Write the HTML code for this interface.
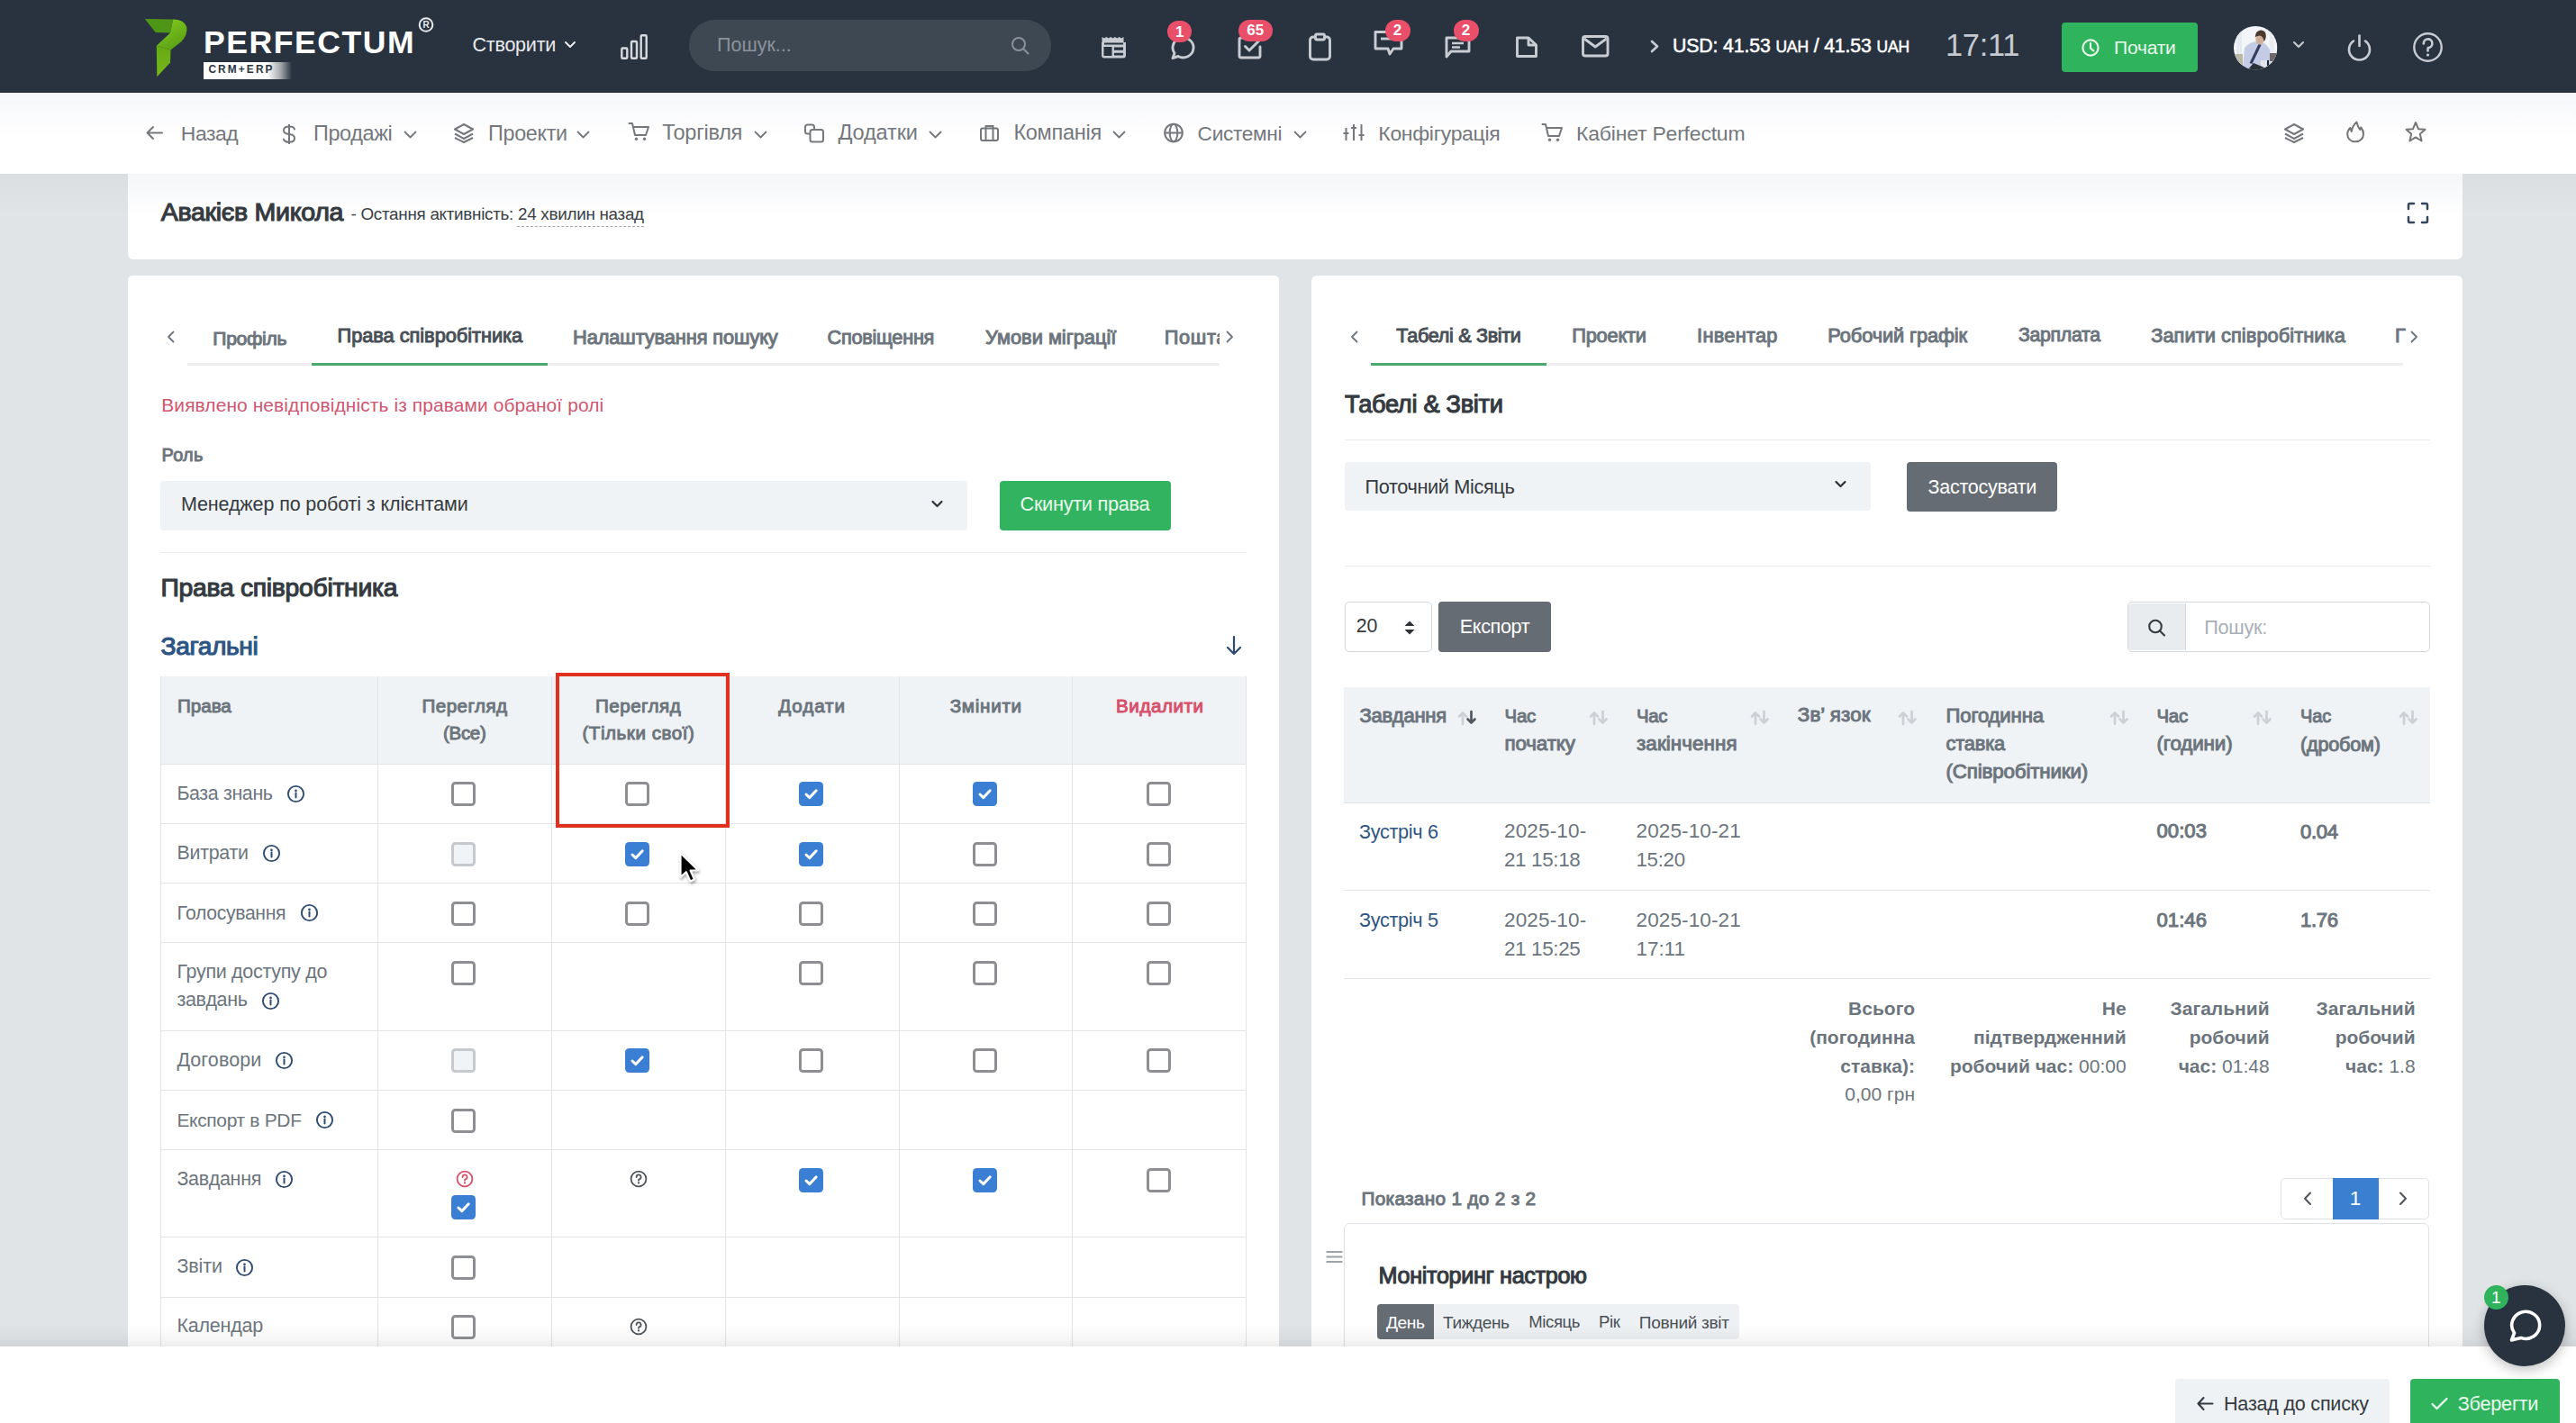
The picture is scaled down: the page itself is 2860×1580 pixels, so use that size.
<!DOCTYPE html><html><head><meta charset="utf-8"><style>
html,body{margin:0;padding:0;}
body{width:2860px;height:1580px;position:relative;overflow:hidden;background:#e1e4e6;font-family:"Liberation Sans",sans-serif;}
.t{position:absolute;white-space:nowrap;line-height:1;}
.r{position:absolute;box-sizing:border-box;}
svg.r{overflow:visible;}
.badge{background:#ea4f6a;color:#fff;font-weight:700;font-size:17px;line-height:1;display:flex;align-items:center;justify-content:center;font-family:"Liberation Sans",sans-serif;}
</style></head><body>
<div class="r" style="left:0px;top:0px;width:2860px;height:103px;background:#29333f;"></div>
<svg class="r" style="left:150px;top:15px;" width="70" height="77" viewBox="0 0 70 77" fill="none">
<defs><linearGradient id="lg2" x1="0" y1="0" x2="0.6" y2="1"><stop offset="0" stop-color="#86cf1f"/><stop offset="1" stop-color="#5a9f15"/></linearGradient>
<linearGradient id="lg3" x1="0" y1="0" x2="0" y2="1"><stop offset="0" stop-color="#66aa12"/><stop offset="1" stop-color="#76b61c"/></linearGradient></defs>
<path d="M10.8 5.9 L42.2 6.5 L39 21.6 L22.7 21.1 Z" fill="#4f9617"/>
<path d="M42.2 6.5 Q54.5 6.5 57.3 15 Q58.5 24 51 31.5 L39.5 40.6 L23.8 35.7 L39 21.6 Z" fill="url(#lg2)"/>
<path d="M23.8 35.7 L39.5 40.6 L39 54.6 L24.3 70.3 Z" fill="url(#lg3)"/>
</svg>
<div class="t" style="left:226.00px;top:30.34px;font-size:35.61px;color:#ffffff;font-weight:700;letter-spacing:1.500px;">PERFECTUM</div>
<svg class="r" style="left:463px;top:19px;" width="20" height="17" viewBox="0 0 20 17" fill="none"><circle cx="10" cy="8.5" r="7.3" stroke="#e8eaee" stroke-width="2"/><text x="10" y="12.3" text-anchor="middle" font-family="Liberation Sans" font-weight="700" font-size="10" fill="#e8eaee">R</text></svg>
<div class="r" style="left:226px;top:68.5px;width:98px;height:19.5px;background:linear-gradient(90deg,#ffffff 0%,#ffffff 72%,rgba(255,255,255,0.55) 88%,rgba(255,255,255,0) 100%);"></div>
<div class="t" style="left:231.40px;top:71.80px;font-size:11.92px;color:#2b3440;font-weight:700;letter-spacing:2.100px;">CRM+ERP</div>
<div class="t" style="left:524.50px;top:39.22px;font-size:21.55px;color:#e9ebee;letter-spacing:-0.250px;">Створити</div>
<svg class="r" style="left:626px;top:45px;" width="14" height="10" viewBox="0 0 14 10" fill="none"><path d="M2 2 L7 7 L12 2" stroke="#e9ebee" stroke-width="2" stroke-linecap="round" stroke-linejoin="round"/></svg>
<svg class="r" style="left:689px;top:38px;" width="31" height="28" viewBox="0 0 31 28" fill="none"><rect x="1.3" y="15.5" width="6" height="11.2" rx="1" stroke="#d6d9de" stroke-width="2.4"/><rect x="12" y="8" width="6" height="18.7" rx="1" stroke="#d6d9de" stroke-width="2.4"/><rect x="22.7" y="1.3" width="6" height="25.4" rx="1" stroke="#d6d9de" stroke-width="2.4"/></svg>
<div class="r" style="left:765px;top:21.5px;width:402px;height:57.5px;background:#3e4853;border-radius:29px;"></div>
<div class="t" style="left:796.00px;top:40.08px;font-size:21.50px;color:#8b929a;">Пошук...</div>
<svg class="r" style="left:1122px;top:40px;" width="22" height="21" viewBox="0 0 22 21" fill="none"><circle cx="9" cy="9" r="7" stroke="#8b929a" stroke-width="2"/><path d="M14 14 L19.5 19.5" stroke="#8b929a" stroke-width="2" stroke-linecap="round"/></svg>
<svg class="r" style="left:1221px;top:39px;" width="30" height="27" viewBox="0 0 30 27" fill="none"><path d="M2.5 2 l2.4 1.6 l2.4 -1.6 l2.4 1.6 l2.4 -1.6 l2.4 1.6 l2.4 -1.6 l2.4 1.6 l2.4 -1.6 l2.4 1.6 l2.4 -1.6 V8.5 H2.5 Z" fill="#c9cdd3"/><path d="M3.5 8 V22.5 A1.5 1.5 0 0 0 5 24 H26 A1.5 1.5 0 0 0 27.5 22.5 V8" stroke="#c9cdd3" stroke-width="2.9"/><path d="M2.5 12 H28.5" stroke="#c9cdd3" stroke-width="2.9"/><path d="M14.5 12 V24 M14.5 18.2 H28" stroke="#c9cdd3" stroke-width="2.9"/><rect x="4.5" y="13" width="9" height="10" fill="#29333f"/></svg>
<svg class="r" style="left:1296px;top:40px;" width="30" height="27" viewBox="0 0 30 27" fill="none"><path d="M6 24.5 L8 19 A11.5 11 0 1 1 12 22.5 Z" stroke="#c9cdd3" stroke-width="2.9" stroke-linejoin="round"/></svg>
<svg class="r" style="left:1373px;top:38px;" width="30" height="28" viewBox="0 0 30 28" fill="none"><path d="M20 4 H5 A2 2 0 0 0 3 6 V24 A2 2 0 0 0 5 26 H24 A2 2 0 0 0 26 24 V14" stroke="#c9cdd3" stroke-width="2.9" stroke-linecap="round"/><path d="M9.5 13.5 L14 18 L25 7" stroke="#c9cdd3" stroke-width="2.9" stroke-linecap="round" stroke-linejoin="round"/></svg>
<svg class="r" style="left:1452px;top:36px;" width="28" height="32" viewBox="0 0 28 32" fill="none"><rect x="2.5" y="5" width="22" height="25" rx="3.5" stroke="#c9cdd3" stroke-width="2.9"/><rect x="8.5" y="2" width="10" height="6" rx="1.5" stroke="#c9cdd3" stroke-width="2.9" fill="#29333f"/></svg>
<svg class="r" style="left:1525px;top:33px;" width="34" height="30" viewBox="0 0 34 30" fill="none"><path d="M2 2.5 H31 V21 H22 L18 27 L16 21 H2 Z" stroke="#c9cdd3" stroke-width="2.9" stroke-linejoin="round"/><path d="M8 10 H20" stroke="#c9cdd3" stroke-width="2.9"/></svg>
<svg class="r" style="left:1603px;top:38px;" width="31" height="28" viewBox="0 0 31 28" fill="none"><path d="M3 25 V4 H28 V19 H8 Z" stroke="#c9cdd3" stroke-width="2.9" stroke-linejoin="round"/><path d="M9 10 H22 M9 14.5 H18" stroke="#c9cdd3" stroke-width="2.4"/></svg>
<svg class="r" style="left:1682px;top:40px;" width="26" height="25" viewBox="0 0 26 25" fill="none"><path d="M2.5 2 H15 L23.5 10 V22.5 H2.5 Z" stroke="#c9cdd3" stroke-width="2.9" stroke-linejoin="round"/><path d="M15 2 V10 H23.5" stroke="#c9cdd3" stroke-width="2.9" stroke-linejoin="round"/></svg>
<svg class="r" style="left:1756px;top:39px;" width="31" height="25" viewBox="0 0 31 25" fill="none"><rect x="1.5" y="1.5" width="27.5" height="21.5" rx="2.5" stroke="#c9cdd3" stroke-width="2.9"/><path d="M3 4 L15.25 13 L27.5 4" stroke="#c9cdd3" stroke-width="2.9" stroke-linejoin="round"/></svg>
<div class="r badge" style="left:1296.2px;top:22.8px;width:27px;height:24.5px;border-radius:12.25px;">1</div>
<div class="r badge" style="left:1375.0px;top:21.7px;width:37.5px;height:24px;border-radius:12.0px;">65</div>
<div class="r badge" style="left:1537.5px;top:21.5px;width:28px;height:24.5px;border-radius:12.25px;">2</div>
<div class="r badge" style="left:1613.5px;top:21.5px;width:28px;height:24.5px;border-radius:12.25px;">2</div>
<svg class="r" style="left:1831px;top:44px;" width="13" height="15" viewBox="0 0 13 15" fill="none"><path d="M3 2 L9 7.5 L3 13" stroke="#c9cdd3" stroke-width="2.6" stroke-linecap="round" stroke-linejoin="round"/></svg>
<div class="t" style="left:1857px;top:41.4px;font-size:21.3px;color:#ffffff;letter-spacing:-0.15px;-webkit-text-stroke:0.5px #fff;">USD: 41.53 <span style="font-size:17.5px">UAH</span> / 41.53 <span style="font-size:17.5px">UAH</span></div>
<div class="t" style="left:2160.00px;top:33.34px;font-size:34.43px;color:#c6cad0;letter-spacing:-0.312px;">17:11</div>
<div class="r" style="left:2289px;top:25px;width:151px;height:55px;background:#30b35d;border-radius:4px;"></div>
<svg class="r" style="left:2310px;top:42px;" width="22" height="22" viewBox="0 0 22 22" fill="none"><circle cx="11" cy="11" r="8.6" stroke="#e6fbe9" stroke-width="2.2"/><path d="M11 6 V11.5 L14.3 14.3" stroke="#e6fbe9" stroke-width="2.2" stroke-linecap="round"/></svg>
<div class="t" style="left:2347.00px;top:42.16px;font-size:21.07px;color:#eafcee;letter-spacing:-0.230px;">Почати</div>
<svg class="r" style="left:2479.8px;top:28.6px;" width="48.4" height="48.4" viewBox="0 0 48.4 48.4" fill="none"><defs><clipPath id="avc"><circle cx="24.2" cy="24.2" r="24.2"/></clipPath></defs>
<g clip-path="url(#avc)"><rect width="48.4" height="48.4" fill="#f3f5f9"/>
<rect x="3" y="0" width="6" height="48" fill="#e6eaf1"/><rect x="40" y="0" width="5" height="48" fill="#e9edf3"/>
<path d="M10 48 L12 24 Q18 17 27 17 Q36 18 40 26 L41 48 Z" fill="#c3cbe5"/>
<path d="M28 19 L17.5 41 L20.5 42 L30.5 21 Z" fill="#333d60"/>
<ellipse cx="29" cy="15" rx="4.6" ry="5.6" fill="#cfae9a"/>
<path d="M23.8 12.5 Q24 5 30 4.6 Q36 5 35.8 11 Q35.5 15.5 33.5 17 Q33 11 28.5 10.5 Q25 11 23.8 12.5 Z" fill="#4b3a2e"/>
<rect x="0" y="31" width="10" height="14" fill="#b9b8a6"/>
<rect x="30" y="38" width="8" height="8" fill="#e3e5e9"/><rect x="37" y="38" width="2" height="6" fill="#1f2530"/>
<rect x="40" y="30" width="7" height="9" fill="#6d6768"/>
<path d="M16 48 L22 41 L34 46 L34 48 Z" fill="#2a2f38"/></g></svg>
<svg class="r" style="left:2545px;top:45px;" width="14" height="10" viewBox="0 0 14 10" fill="none"><path d="M2 2 L7 7 L12 2" stroke="#c9cdd3" stroke-width="2" stroke-linecap="round" stroke-linejoin="round"/></svg>
<svg class="r" style="left:2603px;top:36px;" width="33" height="33" viewBox="0 0 33 33" fill="none"><path d="M10 9.5 A11.5 11.5 0 1 0 23 9.5" stroke="#c9cdd3" stroke-width="2.6" stroke-linecap="round"/><path d="M16.5 3.5 V15" stroke="#c9cdd3" stroke-width="2.6" stroke-linecap="round"/></svg>
<svg class="r" style="left:2678px;top:35px;" width="35" height="35" viewBox="0 0 35 35" fill="none"><circle cx="17.5" cy="17.5" r="15.2" stroke="#c9cdd3" stroke-width="2.4"/><path d="M12.8 13.5 A4.8 4.8 0 1 1 18 18 Q17.5 18.5 17.5 20.5 V21.5" stroke="#c9cdd3" stroke-width="2.6" stroke-linecap="round"/><circle cx="17.5" cy="26" r="1.6" fill="#c9cdd3"/></svg>
<div class="r" style="left:0px;top:103px;width:2860px;height:90px;background:linear-gradient(180deg,#f5f6f9 0px,#f9fafc 18px,#fdfdfe 38px,#ffffff 50px,#ffffff 100%);"></div>
<svg class="r" style="left:160px;top:138px;" width="22" height="20" viewBox="0 0 22 20" fill="none"><path d="M20 9.5 H3.5 M10 3 L3.5 9.5 L10 16" stroke="#74787d" stroke-width="2" stroke-linecap="round" stroke-linejoin="round"/></svg>
<div class="t" style="left:200.80px;top:137.00px;font-size:22.90px;color:#74787d;letter-spacing:-0.450px;">Назад</div>
<svg class="r" style="left:311px;top:136px;" width="20" height="26" viewBox="0 0 20 26" fill="none"><path d="M10 2 V24" stroke="#74787d" stroke-width="2"/><path d="M16 7.5 Q15.5 4.5 10 4.5 Q4 4.5 4 8.8 Q4 12.5 10 13 Q16 13.5 16 17.5 Q16 21.8 10 21.8 Q4.5 21.8 4 18.5" stroke="#74787d" stroke-width="2" stroke-linecap="round"/></svg>
<div class="t" style="left:348.00px;top:136.56px;font-size:23.43px;color:#74787d;letter-spacing:-0.375px;">Продажі</div>
<svg class="r" style="left:447.5px;top:145px;" width="15" height="10" viewBox="0 0 15 10" fill="none"><path d="M1.5 1.5 L7.5 7.5 L13.5 1.5" stroke="#74787d" stroke-width="1.8" stroke-linecap="round" stroke-linejoin="round"/></svg>
<svg class="r" style="left:503px;top:136px;" width="24" height="23" viewBox="0 0 24 23" fill="none"><path d="M12 2 L22 7.5 L12 13 L2 7.5 Z" stroke="#74787d" stroke-width="2" stroke-linejoin="round"/><path d="M2 12.5 L12 18 L22 12.5" stroke="#74787d" stroke-width="2" stroke-linejoin="round"/><path d="M2 17 L12 22 L22 17" stroke="#74787d" stroke-width="2" stroke-linejoin="round"/></svg>
<div class="t" style="left:542.00px;top:136.65px;font-size:23.31px;color:#74787d;letter-spacing:-0.283px;">Проекти</div>
<svg class="r" style="left:640px;top:145px;" width="15" height="10" viewBox="0 0 15 10" fill="none"><path d="M1.5 1.5 L7.5 7.5 L13.5 1.5" stroke="#74787d" stroke-width="1.8" stroke-linecap="round" stroke-linejoin="round"/></svg>
<svg class="r" style="left:697px;top:135px;" width="25" height="22" viewBox="0 0 25 22" fill="none"><path d="M1.5 2 H5 L8 15 H20 L23 6 H6" stroke="#74787d" stroke-width="2" stroke-linecap="round" stroke-linejoin="round"/><circle cx="9.5" cy="19.3" r="1.7" fill="#74787d"/><circle cx="18.5" cy="19.3" r="1.7" fill="#74787d"/></svg>
<div class="t" style="left:735.20px;top:136.46px;font-size:23.55px;color:#74787d;letter-spacing:-0.264px;">Торгівля</div>
<svg class="r" style="left:836.5px;top:145px;" width="15" height="10" viewBox="0 0 15 10" fill="none"><path d="M1.5 1.5 L7.5 7.5 L13.5 1.5" stroke="#74787d" stroke-width="1.8" stroke-linecap="round" stroke-linejoin="round"/></svg>
<svg class="r" style="left:892px;top:136px;" width="24" height="23" viewBox="0 0 24 23" fill="none"><path d="M12 7 V5 A2.5 2.5 0 0 0 9.5 2.5 H4.5 A2.5 2.5 0 0 0 2 5 V10 A2.5 2.5 0 0 0 4.5 12.5 H7" stroke="#74787d" stroke-width="2"/><rect x="7.5" y="8" width="14.5" height="13.5" rx="2.5" stroke="#74787d" stroke-width="2"/></svg>
<div class="t" style="left:930.40px;top:136.46px;font-size:23.55px;color:#74787d;letter-spacing:-0.125px;">Додатки</div>
<svg class="r" style="left:1030.5px;top:145px;" width="15" height="10" viewBox="0 0 15 10" fill="none"><path d="M1.5 1.5 L7.5 7.5 L13.5 1.5" stroke="#74787d" stroke-width="1.8" stroke-linecap="round" stroke-linejoin="round"/></svg>
<svg class="r" style="left:1087px;top:137px;" width="23" height="21" viewBox="0 0 23 21" fill="none"><rect x="2" y="5.5" width="19" height="13.5" rx="2" stroke="#74787d" stroke-width="2"/><path d="M7.5 5.5 V3 H15.5 V5.5 M7.5 5.5 V19 M15.5 5.5 V19" stroke="#74787d" stroke-width="2"/></svg>
<div class="t" style="left:1125.40px;top:136.46px;font-size:23.55px;color:#74787d;letter-spacing:-0.293px;">Компанія</div>
<svg class="r" style="left:1235px;top:145px;" width="15" height="10" viewBox="0 0 15 10" fill="none"><path d="M1.5 1.5 L7.5 7.5 L13.5 1.5" stroke="#74787d" stroke-width="1.8" stroke-linecap="round" stroke-linejoin="round"/></svg>
<svg class="r" style="left:1290.5px;top:136px;" width="24" height="23" viewBox="0 0 24 23" fill="none"><circle cx="12" cy="11.5" r="9.8" stroke="#74787d" stroke-width="2"/><path d="M2.2 11.5 H21.8" stroke="#74787d" stroke-width="2"/><ellipse cx="12" cy="11.5" rx="4.3" ry="9.8" stroke="#74787d" stroke-width="2"/></svg>
<div class="t" style="left:1329.60px;top:137.02px;font-size:22.65px;color:#74787d;letter-spacing:-0.314px;">Системні</div>
<svg class="r" style="left:1436px;top:145px;" width="15" height="10" viewBox="0 0 15 10" fill="none"><path d="M1.5 1.5 L7.5 7.5 L13.5 1.5" stroke="#74787d" stroke-width="1.8" stroke-linecap="round" stroke-linejoin="round"/></svg>
<svg class="r" style="left:1491px;top:136px;" width="24" height="22" viewBox="0 0 24 22" fill="none"><path d="M3.5 6 V20 M12 2 V20 M20.5 2 V20" stroke="#74787d" stroke-width="2"/><path d="M0.5 12 H6.5 M9 6 H15 M17.5 14 H23.5" stroke="#74787d" stroke-width="2"/></svg>
<div class="t" style="left:1530.30px;top:136.75px;font-size:22.97px;color:#74787d;letter-spacing:-0.300px;">Конфігурація</div>
<svg class="r" style="left:1710.5px;top:136px;" width="25" height="22" viewBox="0 0 25 22" fill="none"><path d="M1.5 2 H5 L8 15 H20 L23 6 H6" stroke="#74787d" stroke-width="2" stroke-linecap="round" stroke-linejoin="round"/><circle cx="9.5" cy="19.3" r="1.7" fill="#74787d"/><circle cx="18.5" cy="19.3" r="1.7" fill="#74787d"/></svg>
<div class="t" style="left:1750.00px;top:136.75px;font-size:22.97px;color:#74787d;letter-spacing:-0.194px;">Кабінет Perfectum</div>
<svg class="r" style="left:2535px;top:136px;" width="24" height="23" viewBox="0 0 24 23" fill="none"><path d="M12 2 L22 7.5 L12 13 L2 7.5 Z" stroke="#74787d" stroke-width="2" stroke-linejoin="round"/><path d="M2 12.5 L12 18 L22 12.5" stroke="#74787d" stroke-width="2" stroke-linejoin="round"/><path d="M2 17 L12 22 L22 17" stroke="#74787d" stroke-width="2" stroke-linejoin="round"/></svg>
<svg class="r" style="left:2603px;top:133px;" width="24" height="26" viewBox="0 0 24 26" fill="none"><path d="M12 24.3 C6.5 24.3 3.2 20.5 3.2 16 C3.2 12.5 4.8 10.5 6.3 9 L7.8 13 C8.5 9 10 5.5 13.5 2.5 C14.5 6.5 14.8 8.5 17.2 11 L18.3 8.5 C20 10.5 21 13 21 16 C21 20.5 17.5 24.3 12 24.3 Z" stroke="#757575" stroke-width="2" stroke-linejoin="round"/></svg>
<svg class="r" style="left:2669px;top:133px;" width="26" height="26" viewBox="0 0 26 26" fill="none"><path d="M13 3 L16 10.2 L23.5 10.8 L17.8 15.8 L19.6 23.5 L13 19.4 L6.4 23.5 L8.2 15.8 L2.5 10.8 L10 10.2 Z" stroke="#757575" stroke-width="2" stroke-linejoin="round"/></svg>
<div class="r" style="left:0px;top:193px;width:2860px;height:47px;background:linear-gradient(180deg,rgba(0,0,0,0.025) 0%,rgba(0,0,0,0) 100%);"></div>
<div class="r" style="left:142px;top:193px;width:2592px;height:94.5px;background:#ffffff;border-radius:0 0 6px 6px;"></div>
<div class="r" style="left:142px;top:193px;width:2592px;height:52px;background:linear-gradient(180deg,#f5f6f8 0%,#f9fafb 40%,#fdfdfe 75%,#ffffff 100%);"></div>
<div class="t" style="left:178.78px;top:221.21px;font-size:28.56px;color:#353a40;-webkit-text-stroke:1.16px #353a40;letter-spacing:-0.305px;">Авакієв Микола</div>
<div class="t" style="left:389.50px;top:228.88px;font-size:18.82px;color:#3b4046;letter-spacing:-0.271px;">- Остання активність: 24 хвилин назад</div>
<div class="r" style="left:574px;top:251px;width:141px;height:0;border-top:1.3px dashed #a0a5ab;"></div>
<svg class="r" style="left:2672px;top:223.5px;" width="25" height="25" viewBox="0 0 25 25" fill="none"><path d="M2 8 V3.5 A1.5 1.5 0 0 1 3.5 2 H8 M17 2 H21.5 A1.5 1.5 0 0 1 23 3.5 V8 M23 17 V21.5 A1.5 1.5 0 0 1 21.5 23 H17 M8 23 H3.5 A1.5 1.5 0 0 1 2 21.5 V17" stroke="#34465c" stroke-width="2.5" stroke-linecap="round"/></svg>
<div class="r" style="left:142px;top:306px;width:1278px;height:1294px;background:#ffffff;border-radius:5px;"></div>
<svg class="r" style="left:184px;top:367px;" width="12" height="14" viewBox="0 0 12 14" fill="none"><path d="M8.5 1.5 L3 7 L8.5 12.5" stroke="#6c757d" stroke-width="1.8" stroke-linecap="round" stroke-linejoin="round"/></svg>
<div class="t" style="left:236.29px;top:364.94px;font-size:21.08px;color:#6c757d;-webkit-text-stroke:0.98px #6c757d;letter-spacing:-0.280px;">Профіль</div>
<div class="t" style="left:374.50px;top:361.53px;font-size:21.80px;color:#495057;-webkit-text-stroke:1.00px #495057;letter-spacing:-0.041px;">Права співробітника</div>
<div class="t" style="left:636.00px;top:364.33px;font-size:21.80px;color:#6c757d;-webkit-text-stroke:1.00px #6c757d;letter-spacing:-0.108px;">Налаштування пошуку</div>
<div class="t" style="left:918.50px;top:364.35px;font-size:21.79px;color:#6c757d;-webkit-text-stroke:0.99px #6c757d;letter-spacing:-0.311px;">Сповіщення</div>
<div class="t" style="left:1094.10px;top:364.33px;font-size:21.80px;color:#6c757d;-webkit-text-stroke:1.00px #6c757d;">Умови міграції</div>
<div class="r" style="left:1294px;top:0;width:60px;height:420px;overflow:hidden;"><div class="t" style="left:-1.2px;top:364.2px;font-size:21.8px;color:#6c757d;-webkit-text-stroke:0.99px #6c757d;letter-spacing:0.6px;">Пошта</div></div>
<svg class="r" style="left:1359px;top:367px;" width="12" height="14" viewBox="0 0 12 14" fill="none"><path d="M3.5 1.5 L9 7 L3.5 12.5" stroke="#6c757d" stroke-width="1.8" stroke-linecap="round" stroke-linejoin="round"/></svg>
<div class="r" style="left:208px;top:403px;width:1146px;height:3px;background:#eceef0;"></div>
<div class="r" style="left:346px;top:402.5px;width:262px;height:3.5px;background:#4aa96c;"></div>
<div class="t" style="left:179.30px;top:440.07px;font-size:20.93px;color:#cf5670;letter-spacing:0.105px;">Виявлено невідповідність із правами обраної ролі</div>
<div class="t" style="left:179.47px;top:495.83px;font-size:19.91px;color:#6c757d;-webkit-text-stroke:0.95px #6c757d;letter-spacing:0.267px;">Роль</div>
<div class="r" style="left:178px;top:534px;width:896px;height:54.5px;background:#f0f3f6;border-radius:4px;"></div>
<div class="t" style="left:200.90px;top:550.08px;font-size:21.51px;color:#353a40;letter-spacing:-0.116px;">Менеджер по роботі з клієнтами</div>
<svg class="r" style="left:1033px;top:554px;" width="15" height="12" viewBox="0 0 15 12" fill="none"><path d="M2.5 3 L7.5 8 L12.5 3" stroke="#2d3238" stroke-width="2.2" stroke-linecap="round" stroke-linejoin="round"/></svg>
<div class="r" style="left:1110px;top:534px;width:190px;height:55px;background:#32b35f;border-radius:4px;"></div>
<div class="t" style="left:1132.50px;top:549.38px;font-size:21.75px;color:#eafcee;letter-spacing:-0.308px;">Скинути права</div>
<div class="r" style="left:178px;top:613px;width:1206px;height:1.2999999999999545px;background:#e9ecef;"></div>
<div class="t" style="left:178.58px;top:638.04px;font-size:28.29px;color:#343a40;-webkit-text-stroke:1.16px #343a40;letter-spacing:-0.281px;">Права співробітника</div>
<div class="t" style="left:178.58px;top:703.04px;font-size:28.17px;color:#2d5583;-webkit-text-stroke:1.15px #2d5583;letter-spacing:-0.401px;">Загальні</div>
<svg class="r" style="left:1360px;top:705px;" width="20" height="24" viewBox="0 0 20 24" fill="none"><path d="M10 2 V21 M3 14 L10 21 L17 14" stroke="#2d4a6e" stroke-width="2.2" stroke-linecap="round" stroke-linejoin="round"/></svg>
<div class="r" style="left:178.5px;top:750.8px;width:1204.9px;height:97.60000000000002px;background:#f0f3f6;"></div>
<div class="r" style="left:178.0px;top:750.8px;width:1.1999999999999886px;height:849.2px;background:#e2e5e8;"></div>
<div class="r" style="left:418.8px;top:750.8px;width:1.1999999999999886px;height:849.2px;background:#e2e5e8;"></div>
<div class="r" style="left:612.0px;top:750.8px;width:1.2000000000000455px;height:849.2px;background:#e2e5e8;"></div>
<div class="r" style="left:804.9px;top:750.8px;width:1.2000000000000455px;height:849.2px;background:#e2e5e8;"></div>
<div class="r" style="left:997.5px;top:750.8px;width:1.2000000000000455px;height:849.2px;background:#e2e5e8;"></div>
<div class="r" style="left:1189.9px;top:750.8px;width:1.2000000000000455px;height:849.2px;background:#e2e5e8;"></div>
<div class="r" style="left:1382.9px;top:750.8px;width:1.2000000000000455px;height:849.2px;background:#e2e5e8;"></div>
<div class="r" style="left:178.5px;top:847.9px;width:1204.9px;height:1.2000000000000455px;background:#e2e5e8;"></div>
<div class="r" style="left:178.5px;top:914.0px;width:1204.9px;height:1.2000000000000455px;background:#e2e5e8;"></div>
<div class="r" style="left:178.5px;top:980.0px;width:1204.9px;height:1.2000000000000455px;background:#e2e5e8;"></div>
<div class="r" style="left:178.5px;top:1046.1px;width:1204.9px;height:1.2000000000000455px;background:#e2e5e8;"></div>
<div class="r" style="left:178.5px;top:1143.9px;width:1204.9px;height:1.2000000000000455px;background:#e2e5e8;"></div>
<div class="r" style="left:178.5px;top:1210.0px;width:1204.9px;height:1.2000000000000455px;background:#e2e5e8;"></div>
<div class="r" style="left:178.5px;top:1276.1px;width:1204.9px;height:1.2000000000000455px;background:#e2e5e8;"></div>
<div class="r" style="left:178.5px;top:1373.2px;width:1204.9px;height:1.2000000000000455px;background:#e2e5e8;"></div>
<div class="r" style="left:178.5px;top:1439.8px;width:1204.9px;height:1.2000000000000455px;background:#e2e5e8;"></div>
<div class="r" style="left:178.5px;top:1506.1px;width:1204.9px;height:1.2000000000000455px;background:#e2e5e8;"></div>
<div class="t" style="left:196.88px;top:773.72px;font-size:20.64px;color:#6c757d;-webkit-text-stroke:0.97px #6c757d;">Права</div>
<div class="t" style="left:468.48px;top:773.72px;font-size:20.64px;color:#6c757d;-webkit-text-stroke:0.97px #6c757d;letter-spacing:0.433px;">Перегляд</div>
<div class="t" style="left:491.98px;top:803.75px;font-size:20.57px;color:#6c757d;-webkit-text-stroke:0.96px #6c757d;letter-spacing:-0.316px;">(Все)</div>
<div class="t" style="left:661.08px;top:773.72px;font-size:20.64px;color:#6c757d;-webkit-text-stroke:0.97px #6c757d;letter-spacing:0.448px;">Перегляд</div>
<div class="t" style="left:646.48px;top:803.72px;font-size:20.60px;color:#6c757d;-webkit-text-stroke:0.97px #6c757d;letter-spacing:0.528px;">(Тільки свої)</div>
<div class="t" style="left:864.28px;top:773.72px;font-size:20.64px;color:#6c757d;-webkit-text-stroke:0.97px #6c757d;letter-spacing:0.897px;">Додати</div>
<div class="t" style="left:1054.68px;top:773.72px;font-size:20.64px;color:#6c757d;-webkit-text-stroke:0.97px #6c757d;letter-spacing:0.722px;">Змінити</div>
<div class="t" style="left:1239.08px;top:773.72px;font-size:20.64px;color:#d9506b;-webkit-text-stroke:0.97px #d9506b;letter-spacing:0.526px;">Видалити</div>
<div class="t" style="left:196.40px;top:870.66px;font-size:21.40px;color:#6c757d;letter-spacing:-0.356px;">База знань</div>
<svg class="r" style="left:318.4px;top:871.1999999999999px;" width="21" height="21" viewBox="0 0 21 21" fill="none"><circle cx="10.5" cy="10.5" r="8.6" stroke="#2f4c72" stroke-width="1.9"/><circle cx="10.5" cy="6.9" r="1.3" fill="#2f4c72"/><path d="M10.5 9.6 V14.6" stroke="#2f4c72" stroke-width="2" stroke-linecap="round"/></svg>
<div class="t" style="left:196.40px;top:936.79px;font-size:21.37px;color:#6c757d;letter-spacing:-0.217px;">Витрати</div>
<svg class="r" style="left:290.7px;top:937.3px;" width="21" height="21" viewBox="0 0 21 21" fill="none"><circle cx="10.5" cy="10.5" r="8.6" stroke="#2f4c72" stroke-width="1.9"/><circle cx="10.5" cy="6.9" r="1.3" fill="#2f4c72"/><path d="M10.5 9.6 V14.6" stroke="#2f4c72" stroke-width="2" stroke-linecap="round"/></svg>
<div class="t" style="left:196.40px;top:1002.96px;font-size:21.18px;color:#6c757d;letter-spacing:-0.340px;">Голосування</div>
<svg class="r" style="left:333px;top:1003.3px;" width="21" height="21" viewBox="0 0 21 21" fill="none"><circle cx="10.5" cy="10.5" r="8.6" stroke="#2f4c72" stroke-width="1.9"/><circle cx="10.5" cy="6.9" r="1.3" fill="#2f4c72"/><path d="M10.5 9.6 V14.6" stroke="#2f4c72" stroke-width="2" stroke-linecap="round"/></svg>
<div class="t" style="left:196.40px;top:1166.58px;font-size:21.50px;color:#6c757d;letter-spacing:0.107px;">Договори</div>
<svg class="r" style="left:304.8px;top:1167.2px;" width="21" height="21" viewBox="0 0 21 21" fill="none"><circle cx="10.5" cy="10.5" r="8.6" stroke="#2f4c72" stroke-width="1.9"/><circle cx="10.5" cy="6.9" r="1.3" fill="#2f4c72"/><path d="M10.5 9.6 V14.6" stroke="#2f4c72" stroke-width="2" stroke-linecap="round"/></svg>
<div class="t" style="left:196.40px;top:1233.12px;font-size:20.98px;color:#6c757d;letter-spacing:-0.321px;">Експорт в PDF</div>
<svg class="r" style="left:349.6px;top:1233.3px;" width="21" height="21" viewBox="0 0 21 21" fill="none"><circle cx="10.5" cy="10.5" r="8.6" stroke="#2f4c72" stroke-width="1.9"/><circle cx="10.5" cy="6.9" r="1.3" fill="#2f4c72"/><path d="M10.5 9.6 V14.6" stroke="#2f4c72" stroke-width="2" stroke-linecap="round"/></svg>
<div class="t" style="left:196.40px;top:1298.78px;font-size:21.50px;color:#6c757d;letter-spacing:-0.286px;">Завдання</div>
<svg class="r" style="left:304.8px;top:1299.3999999999999px;" width="21" height="21" viewBox="0 0 21 21" fill="none"><circle cx="10.5" cy="10.5" r="8.6" stroke="#2f4c72" stroke-width="1.9"/><circle cx="10.5" cy="6.9" r="1.3" fill="#2f4c72"/><path d="M10.5 9.6 V14.6" stroke="#2f4c72" stroke-width="2" stroke-linecap="round"/></svg>
<div class="t" style="left:196.40px;top:1395.88px;font-size:21.50px;color:#6c757d;letter-spacing:-0.125px;">Звіти</div>
<svg class="r" style="left:261.2px;top:1396.5px;" width="21" height="21" viewBox="0 0 21 21" fill="none"><circle cx="10.5" cy="10.5" r="8.6" stroke="#2f4c72" stroke-width="1.9"/><circle cx="10.5" cy="6.9" r="1.3" fill="#2f4c72"/><path d="M10.5 9.6 V14.6" stroke="#2f4c72" stroke-width="2" stroke-linecap="round"/></svg>
<div class="t" style="left:196.40px;top:1462.48px;font-size:21.50px;color:#6c757d;letter-spacing:-0.207px;">Календар</div>
<div class="t" style="left:196.40px;top:1069.28px;font-size:21.50px;color:#6c757d;letter-spacing:-0.300px;">Групи доступу до</div>
<div class="t" style="left:196.40px;top:1100.30px;font-size:21.47px;color:#6c757d;letter-spacing:-0.317px;">завдань</div>
<svg class="r" style="left:290.2px;top:1100.6px;" width="21" height="21" viewBox="0 0 21 21" fill="none"><circle cx="10.5" cy="10.5" r="8.6" stroke="#2f4c72" stroke-width="1.9"/><circle cx="10.5" cy="6.9" r="1.3" fill="#2f4c72"/><path d="M10.5 9.6 V14.6" stroke="#2f4c72" stroke-width="2" stroke-linecap="round"/></svg>
<div class="r" style="left:501.0px;top:868.4px;width:27.0px;height:27.0px;border:3px solid #8d8f92;border-radius:4.5px;background:#fff;"></div>
<div class="r" style="left:694.0px;top:868.4px;width:27.0px;height:27.0px;border:3px solid #8d8f92;border-radius:4.5px;background:#fff;"></div>
<div class="r" style="left:886.5px;top:868.4px;width:27.0px;height:27.0px;background:#3a7fd3;border-radius:4.5px;"></div>
<svg class="r" style="left:886.5px;top:868.4px;" width="27" height="27" viewBox="0 0 27 27" fill="none"><path d="M8 14 L11.8 17.6 L19.2 9.8" stroke="#ffffff" stroke-width="3" stroke-linecap="round" stroke-linejoin="round"/></svg>
<div class="r" style="left:1079.9px;top:868.4px;width:27.0px;height:27.0px;background:#3a7fd3;border-radius:4.5px;"></div>
<svg class="r" style="left:1079.9px;top:868.4px;" width="27" height="27" viewBox="0 0 27 27" fill="none"><path d="M8 14 L11.8 17.6 L19.2 9.8" stroke="#ffffff" stroke-width="3" stroke-linecap="round" stroke-linejoin="round"/></svg>
<div class="r" style="left:1272.8px;top:868.4px;width:27.0px;height:27.0px;border:3px solid #8d8f92;border-radius:4.5px;background:#fff;"></div>
<div class="r" style="left:501.0px;top:934.5px;width:27.0px;height:27.0px;border:3px solid #c6c9cd;border-radius:4.5px;background:#f1f4f7;"></div>
<div class="r" style="left:694.0px;top:934.5px;width:27.0px;height:27.0px;background:#3a7fd3;border-radius:4.5px;"></div>
<svg class="r" style="left:694.0px;top:934.5px;" width="27" height="27" viewBox="0 0 27 27" fill="none"><path d="M8 14 L11.8 17.6 L19.2 9.8" stroke="#ffffff" stroke-width="3" stroke-linecap="round" stroke-linejoin="round"/></svg>
<div class="r" style="left:886.5px;top:934.5px;width:27.0px;height:27.0px;background:#3a7fd3;border-radius:4.5px;"></div>
<svg class="r" style="left:886.5px;top:934.5px;" width="27" height="27" viewBox="0 0 27 27" fill="none"><path d="M8 14 L11.8 17.6 L19.2 9.8" stroke="#ffffff" stroke-width="3" stroke-linecap="round" stroke-linejoin="round"/></svg>
<div class="r" style="left:1079.9px;top:934.5px;width:27.0px;height:27.0px;border:3px solid #8d8f92;border-radius:4.5px;background:#fff;"></div>
<div class="r" style="left:1272.8px;top:934.5px;width:27.0px;height:27.0px;border:3px solid #8d8f92;border-radius:4.5px;background:#fff;"></div>
<div class="r" style="left:501.0px;top:1000.5px;width:27.0px;height:27.0px;border:3px solid #8d8f92;border-radius:4.5px;background:#fff;"></div>
<div class="r" style="left:694.0px;top:1000.5px;width:27.0px;height:27.0px;border:3px solid #8d8f92;border-radius:4.5px;background:#fff;"></div>
<div class="r" style="left:886.5px;top:1000.5px;width:27.0px;height:27.0px;border:3px solid #8d8f92;border-radius:4.5px;background:#fff;"></div>
<div class="r" style="left:1079.9px;top:1000.5px;width:27.0px;height:27.0px;border:3px solid #8d8f92;border-radius:4.5px;background:#fff;"></div>
<div class="r" style="left:1272.8px;top:1000.5px;width:27.0px;height:27.0px;border:3px solid #8d8f92;border-radius:4.5px;background:#fff;"></div>
<div class="r" style="left:501.0px;top:1066.6px;width:27.0px;height:27.0px;border:3px solid #8d8f92;border-radius:4.5px;background:#fff;"></div>
<div class="r" style="left:886.5px;top:1066.6px;width:27.0px;height:27.0px;border:3px solid #8d8f92;border-radius:4.5px;background:#fff;"></div>
<div class="r" style="left:1079.9px;top:1066.6px;width:27.0px;height:27.0px;border:3px solid #8d8f92;border-radius:4.5px;background:#fff;"></div>
<div class="r" style="left:1272.8px;top:1066.6px;width:27.0px;height:27.0px;border:3px solid #8d8f92;border-radius:4.5px;background:#fff;"></div>
<div class="r" style="left:501.0px;top:1164.4px;width:27.0px;height:27.0px;border:3px solid #c6c9cd;border-radius:4.5px;background:#f1f4f7;"></div>
<div class="r" style="left:694.0px;top:1164.4px;width:27.0px;height:27.0px;background:#3a7fd3;border-radius:4.5px;"></div>
<svg class="r" style="left:694.0px;top:1164.4px;" width="27" height="27" viewBox="0 0 27 27" fill="none"><path d="M8 14 L11.8 17.6 L19.2 9.8" stroke="#ffffff" stroke-width="3" stroke-linecap="round" stroke-linejoin="round"/></svg>
<div class="r" style="left:886.5px;top:1164.4px;width:27.0px;height:27.0px;border:3px solid #8d8f92;border-radius:4.5px;background:#fff;"></div>
<div class="r" style="left:1079.9px;top:1164.4px;width:27.0px;height:27.0px;border:3px solid #8d8f92;border-radius:4.5px;background:#fff;"></div>
<div class="r" style="left:1272.8px;top:1164.4px;width:27.0px;height:27.0px;border:3px solid #8d8f92;border-radius:4.5px;background:#fff;"></div>
<div class="r" style="left:501.0px;top:1230.5px;width:27.0px;height:27.0px;border:3px solid #8d8f92;border-radius:4.5px;background:#fff;"></div>
<div class="r" style="left:886.5px;top:1296.6px;width:27.0px;height:27.0px;background:#3a7fd3;border-radius:4.5px;"></div>
<svg class="r" style="left:886.5px;top:1296.6px;" width="27" height="27" viewBox="0 0 27 27" fill="none"><path d="M8 14 L11.8 17.6 L19.2 9.8" stroke="#ffffff" stroke-width="3" stroke-linecap="round" stroke-linejoin="round"/></svg>
<div class="r" style="left:1079.9px;top:1296.6px;width:27.0px;height:27.0px;background:#3a7fd3;border-radius:4.5px;"></div>
<svg class="r" style="left:1079.9px;top:1296.6px;" width="27" height="27" viewBox="0 0 27 27" fill="none"><path d="M8 14 L11.8 17.6 L19.2 9.8" stroke="#ffffff" stroke-width="3" stroke-linecap="round" stroke-linejoin="round"/></svg>
<div class="r" style="left:1272.8px;top:1296.6px;width:27.0px;height:27.0px;border:3px solid #8d8f92;border-radius:4.5px;background:#fff;"></div>
<div class="r" style="left:501.0px;top:1393.7px;width:27.0px;height:27.0px;border:3px solid #8d8f92;border-radius:4.5px;background:#fff;"></div>
<div class="r" style="left:501.0px;top:1460.3px;width:27.0px;height:27.0px;border:3px solid #8d8f92;border-radius:4.5px;background:#fff;"></div>
<svg class="r" style="left:506px;top:1299px;" width="20" height="20" viewBox="0 0 20 20" fill="none"><circle cx="10" cy="10" r="8.4" stroke="#d9506b" stroke-width="1.8"/><path d="M7.6 8 A2.5 2.5 0 1 1 10.6 10.4 Q10 10.7 10 11.8" stroke="#d9506b" stroke-width="1.8" stroke-linecap="round"/><circle cx="10" cy="14.4" r="1.15" fill="#d9506b"/></svg>
<div class="r" style="left:501.0px;top:1327px;width:27.0px;height:27px;background:#3a7fd3;border-radius:4.5px;"></div>
<svg class="r" style="left:501.0px;top:1327px;" width="27" height="27" viewBox="0 0 27 27" fill="none"><path d="M8 14 L11.8 17.6 L19.2 9.8" stroke="#ffffff" stroke-width="3" stroke-linecap="round" stroke-linejoin="round"/></svg>
<svg class="r" style="left:698.7px;top:1299px;" width="20" height="20" viewBox="0 0 20 20" fill="none"><circle cx="10" cy="10" r="8.4" stroke="#50555a" stroke-width="1.8"/><path d="M7.6 8 A2.5 2.5 0 1 1 10.6 10.4 Q10 10.7 10 11.8" stroke="#50555a" stroke-width="1.8" stroke-linecap="round"/><circle cx="10" cy="14.4" r="1.15" fill="#50555a"/></svg>
<svg class="r" style="left:698.7px;top:1462.5px;" width="20" height="20" viewBox="0 0 20 20" fill="none"><circle cx="10" cy="10" r="8.4" stroke="#50555a" stroke-width="1.8"/><path d="M7.6 8 A2.5 2.5 0 1 1 10.6 10.4 Q10 10.7 10 11.8" stroke="#50555a" stroke-width="1.8" stroke-linecap="round"/><circle cx="10" cy="14.4" r="1.15" fill="#50555a"/></svg>
<div class="r" style="left:617px;top:746.5px;width:193px;height:172.29999999999995px;border:4.4px solid #e2301f;"></div>
<svg class="r" style="left:750px;top:943px;filter:drop-shadow(1px 2px 1.5px rgba(0,0,0,0.35));" width="30" height="42" viewBox="0 0 30 42" fill="none"><path d="M5.5 4 L5.5 31 L11.8 25.2 L16.3 35.5 L21 33.5 L16.6 23.5 L25 23.3 Z" fill="#000" stroke="#fff" stroke-width="2.2" stroke-linejoin="round"/></svg>
<div class="r" style="left:1456px;top:306px;width:1278px;height:1294px;background:#ffffff;border-radius:6px;"></div>
<svg class="r" style="left:1498px;top:367px;" width="12" height="14" viewBox="0 0 12 14" fill="none"><path d="M8.5 1.5 L3 7 L8.5 12.5" stroke="#6c757d" stroke-width="1.8" stroke-linecap="round" stroke-linejoin="round"/></svg>
<div class="t" style="left:1550.29px;top:361.74px;font-size:21.55px;color:#495057;-webkit-text-stroke:0.99px #495057;letter-spacing:-0.291px;">Табелі &amp; Звіти</div>
<div class="t" style="left:1745.20px;top:361.53px;font-size:21.80px;color:#6c757d;-webkit-text-stroke:1.00px #6c757d;letter-spacing:-0.191px;">Проекти</div>
<div class="t" style="left:1884.10px;top:361.53px;font-size:21.80px;color:#6c757d;-webkit-text-stroke:1.00px #6c757d;letter-spacing:0.258px;">Інвентар</div>
<div class="t" style="left:2029.30px;top:361.53px;font-size:21.80px;color:#6c757d;-webkit-text-stroke:1.00px #6c757d;letter-spacing:-0.100px;">Робочий графік</div>
<div class="t" style="left:2240.89px;top:361.95px;font-size:21.31px;color:#6c757d;-webkit-text-stroke:0.98px #6c757d;letter-spacing:-0.290px;">Зарплата</div>
<div class="t" style="left:2388.20px;top:361.53px;font-size:21.80px;color:#6c757d;-webkit-text-stroke:1.00px #6c757d;letter-spacing:0.056px;">Запити співробітника</div>
<div class="t" style="left:2659.00px;top:361.53px;font-size:21.80px;color:#6c757d;-webkit-text-stroke:1.00px #6c757d;">Г</div>
<svg class="r" style="left:2674px;top:367px;" width="12" height="14" viewBox="0 0 12 14" fill="none"><path d="M3.5 1.5 L9 7 L3.5 12.5" stroke="#6c757d" stroke-width="1.8" stroke-linecap="round" stroke-linejoin="round"/></svg>
<div class="r" style="left:1522px;top:403px;width:1145.5px;height:3px;background:#eceef0;"></div>
<div class="r" style="left:1522px;top:402.5px;width:195px;height:3.5px;background:#4aa96c;"></div>
<div class="t" style="left:1493.06px;top:435.49px;font-size:27.17px;color:#343a40;-webkit-text-stroke:1.13px #343a40;letter-spacing:-0.279px;">Табелі &amp; Звіти</div>
<div class="r" style="left:1492.5px;top:487.8px;width:1205.0px;height:1.1999999999999886px;background:#e9ecef;"></div>
<div class="r" style="left:1492.5px;top:513.3px;width:584.5px;height:54.0px;background:#f0f3f6;border-radius:4px;"></div>
<div class="t" style="left:1515.40px;top:529.61px;font-size:21.71px;color:#353a40;letter-spacing:-0.354px;">Поточний Місяць</div>
<svg class="r" style="left:2036px;top:532px;" width="15" height="12" viewBox="0 0 15 12" fill="none"><path d="M2.5 3 L7.5 8 L12.5 3" stroke="#2d3238" stroke-width="2.2" stroke-linecap="round" stroke-linejoin="round"/></svg>
<div class="r" style="left:2117px;top:513px;width:167px;height:54.60000000000002px;background:#656c73;border-radius:4px;"></div>
<div class="t" style="left:2140.50px;top:530.04px;font-size:21.55px;color:#ffffff;letter-spacing:-0.275px;">Застосувати</div>
<div class="r" style="left:1492.5px;top:627.8px;width:1205.0px;height:1.2000000000000455px;background:#e9ecef;"></div>
<div class="r" style="left:1492.5px;top:668.4px;width:97.0px;height:55.30000000000007px;border:1.3px solid #d3d7db;border-radius:5px;background:#fff;"></div>
<div class="t" style="left:1505.80px;top:685.44px;font-size:21.32px;color:#353a40;letter-spacing:-0.250px;">20</div>
<svg class="r" style="left:1557px;top:687px;" width="16" height="20" viewBox="0 0 16 20" fill="none"><path d="M2.5 8 L8 2.5 L13.5 8 Z M2.5 12 L8 17.5 L13.5 12 Z" fill="#2d3238"/></svg>
<div class="r" style="left:1597.2px;top:668.4px;width:124.79999999999995px;height:55.30000000000007px;background:#656c73;border-radius:4px;"></div>
<div class="t" style="left:1620.80px;top:685.16px;font-size:21.65px;color:#ffffff;letter-spacing:-0.383px;">Експорт</div>
<div class="r" style="left:2362px;top:668.2px;width:335.5px;height:55.39999999999998px;border:1.3px solid #d3d7db;border-radius:5px;background:#fff;"></div>
<div class="r" style="left:2363.3px;top:669.5px;width:64.19999999999982px;height:52.799999999999955px;background:#e9ecef;border-right:1.3px solid #d3d7db;border-radius:4px 0 0 4px;"></div>
<svg class="r" style="left:2383px;top:686px;" width="23" height="22" viewBox="0 0 23 22" fill="none"><circle cx="10" cy="9.5" r="6.8" stroke="#343a40" stroke-width="2.1"/><path d="M15 14.5 L20 19.5" stroke="#343a40" stroke-width="2.1" stroke-linecap="round"/></svg>
<div class="t" style="left:2447.30px;top:685.86px;font-size:21.66px;color:#a9afb5;letter-spacing:-0.280px;">Пошук:</div>
<div class="r" style="left:1492px;top:762.8px;width:1205.5px;height:128.4000000000001px;background:#f0f3f6;"></div>
<div class="r" style="left:1492px;top:890.5px;width:1205.5px;height:1.2999999999999545px;background:#dee2e6;"></div>
<div class="r" style="left:1492px;top:987.6px;width:1205.5px;height:1.1999999999999318px;background:#e3e6e9;"></div>
<div class="r" style="left:1492px;top:1085.6px;width:1205.5px;height:1.2000000000000455px;background:#e3e6e9;"></div>
<div class="t" style="left:1509.50px;top:783.76px;font-size:22.01px;color:#6c757d;-webkit-text-stroke:1.00px #6c757d;letter-spacing:-0.221px;">Завдання</div>
<div class="t" style="left:1670.48px;top:785.04px;font-size:20.49px;color:#6c757d;-webkit-text-stroke:0.96px #6c757d;letter-spacing:-0.206px;">Час</div>
<div class="t" style="left:1670.50px;top:814.94px;font-size:22.38px;color:#6c757d;-webkit-text-stroke:1.01px #6c757d;letter-spacing:-0.118px;">початку</div>
<div class="t" style="left:1816.98px;top:785.14px;font-size:20.38px;color:#6c757d;-webkit-text-stroke:0.96px #6c757d;letter-spacing:-0.305px;">Час</div>
<div class="t" style="left:1817.00px;top:814.94px;font-size:22.38px;color:#6c757d;-webkit-text-stroke:1.01px #6c757d;letter-spacing:0.093px;">закінчення</div>
<div class="t" style="left:1995.80px;top:783.44px;font-size:22.38px;color:#6c757d;-webkit-text-stroke:1.01px #6c757d;letter-spacing:0.077px;">Зв’ язок</div>
<div class="t" style="left:2160.50px;top:783.67px;font-size:22.11px;color:#6c757d;-webkit-text-stroke:1.00px #6c757d;letter-spacing:-0.125px;">Погодинна</div>
<div class="t" style="left:2160.50px;top:815.39px;font-size:21.85px;color:#6c757d;-webkit-text-stroke:1.00px #6c757d;letter-spacing:-0.179px;">ставка</div>
<div class="t" style="left:2160.50px;top:846.44px;font-size:22.38px;color:#6c757d;-webkit-text-stroke:1.01px #6c757d;letter-spacing:-0.172px;">(Співробітники)</div>
<div class="t" style="left:2394.48px;top:785.09px;font-size:20.44px;color:#6c757d;-webkit-text-stroke:0.96px #6c757d;letter-spacing:-0.255px;">Час</div>
<div class="t" style="left:2394.50px;top:814.94px;font-size:22.38px;color:#6c757d;-webkit-text-stroke:1.01px #6c757d;letter-spacing:-0.116px;">(години)</div>
<div class="t" style="left:2553.98px;top:785.38px;font-size:20.10px;color:#6c757d;-webkit-text-stroke:0.95px #6c757d;letter-spacing:-0.176px;">Час</div>
<div class="t" style="left:2553.99px;top:815.62px;font-size:21.58px;color:#6c757d;-webkit-text-stroke:0.99px #6c757d;letter-spacing:-0.177px;">(дробом)</div>
<svg class="r" style="left:1618px;top:788px;" width="22" height="18" viewBox="0 0 22 18" fill="none"><path d="M6 16 V3.5 M2 7.5 L6 3.5 L10 7.5" stroke="#cdd1d5" stroke-width="2.7" stroke-linecap="round" stroke-linejoin="round"/><path d="M15.5 2 V14.5 M11.5 10.5 L15.5 14.5 L19.5 10.5" stroke="#50575e" stroke-width="2.7" stroke-linecap="round" stroke-linejoin="round"/></svg>
<svg class="r" style="left:1764.2px;top:788px;" width="22" height="18" viewBox="0 0 22 18" fill="none"><path d="M6 16 V3.5 M2 7.5 L6 3.5 L10 7.5" stroke="#cdd1d5" stroke-width="2.7" stroke-linecap="round" stroke-linejoin="round"/><path d="M15.5 2 V14.5 M11.5 10.5 L15.5 14.5 L19.5 10.5" stroke="#cdd1d5" stroke-width="2.7" stroke-linecap="round" stroke-linejoin="round"/></svg>
<svg class="r" style="left:1942.8px;top:788px;" width="22" height="18" viewBox="0 0 22 18" fill="none"><path d="M6 16 V3.5 M2 7.5 L6 3.5 L10 7.5" stroke="#cdd1d5" stroke-width="2.7" stroke-linecap="round" stroke-linejoin="round"/><path d="M15.5 2 V14.5 M11.5 10.5 L15.5 14.5 L19.5 10.5" stroke="#cdd1d5" stroke-width="2.7" stroke-linecap="round" stroke-linejoin="round"/></svg>
<svg class="r" style="left:2107.4px;top:788px;" width="22" height="18" viewBox="0 0 22 18" fill="none"><path d="M6 16 V3.5 M2 7.5 L6 3.5 L10 7.5" stroke="#cdd1d5" stroke-width="2.7" stroke-linecap="round" stroke-linejoin="round"/><path d="M15.5 2 V14.5 M11.5 10.5 L15.5 14.5 L19.5 10.5" stroke="#cdd1d5" stroke-width="2.7" stroke-linecap="round" stroke-linejoin="round"/></svg>
<svg class="r" style="left:2341.8px;top:788px;" width="22" height="18" viewBox="0 0 22 18" fill="none"><path d="M6 16 V3.5 M2 7.5 L6 3.5 L10 7.5" stroke="#cdd1d5" stroke-width="2.7" stroke-linecap="round" stroke-linejoin="round"/><path d="M15.5 2 V14.5 M11.5 10.5 L15.5 14.5 L19.5 10.5" stroke="#cdd1d5" stroke-width="2.7" stroke-linecap="round" stroke-linejoin="round"/></svg>
<svg class="r" style="left:2501.2px;top:788px;" width="22" height="18" viewBox="0 0 22 18" fill="none"><path d="M6 16 V3.5 M2 7.5 L6 3.5 L10 7.5" stroke="#cdd1d5" stroke-width="2.7" stroke-linecap="round" stroke-linejoin="round"/><path d="M15.5 2 V14.5 M11.5 10.5 L15.5 14.5 L19.5 10.5" stroke="#cdd1d5" stroke-width="2.7" stroke-linecap="round" stroke-linejoin="round"/></svg>
<svg class="r" style="left:2662.9px;top:788px;" width="22" height="18" viewBox="0 0 22 18" fill="none"><path d="M6 16 V3.5 M2 7.5 L6 3.5 L10 7.5" stroke="#cdd1d5" stroke-width="2.7" stroke-linecap="round" stroke-linejoin="round"/><path d="M15.5 2 V14.5 M11.5 10.5 L15.5 14.5 L19.5 10.5" stroke="#cdd1d5" stroke-width="2.7" stroke-linecap="round" stroke-linejoin="round"/></svg>
<div class="t" style="left:1509.00px;top:913.14px;font-size:21.68px;color:#2d5583;letter-spacing:-0.338px;">Зустріч 6</div>
<div class="t" style="left:1670.00px;top:912.42px;font-size:22.53px;color:#6c757d;letter-spacing:0.143px;">2025-10-</div>
<div class="t" style="left:1670.00px;top:944.31px;font-size:22.43px;color:#6c757d;letter-spacing:-0.357px;">21 15:18</div>
<div class="t" style="left:1816.50px;top:912.42px;font-size:22.53px;color:#6c757d;letter-spacing:0.111px;">2025-10-21</div>
<div class="t" style="left:1816.50px;top:944.40px;font-size:22.31px;color:#6c757d;letter-spacing:-0.312px;">15:20</div>
<div class="t" style="left:2394.50px;top:912.49px;font-size:22.09px;color:#6c757d;-webkit-text-stroke:1.00px #6c757d;letter-spacing:0.049px;">00:03</div>
<div class="t" style="left:2554.00px;top:912.51px;font-size:22.07px;color:#6c757d;-webkit-text-stroke:1.00px #6c757d;letter-spacing:-0.317px;">0.04</div>
<div class="t" style="left:1509.00px;top:1011.44px;font-size:21.68px;color:#2d5583;letter-spacing:-0.338px;">Зустріч 5</div>
<div class="t" style="left:1670.00px;top:1010.72px;font-size:22.53px;color:#6c757d;letter-spacing:0.143px;">2025-10-</div>
<div class="t" style="left:1670.00px;top:1042.61px;font-size:22.43px;color:#6c757d;letter-spacing:-0.357px;">21 15:25</div>
<div class="t" style="left:1816.50px;top:1010.72px;font-size:22.53px;color:#6c757d;letter-spacing:0.111px;">2025-10-21</div>
<div class="t" style="left:1816.50px;top:1042.52px;font-size:22.53px;color:#6c757d;letter-spacing:-0.062px;">17:11</div>
<div class="t" style="left:2394.50px;top:1010.79px;font-size:22.09px;color:#6c757d;-webkit-text-stroke:1.00px #6c757d;letter-spacing:0.049px;">01:46</div>
<div class="t" style="left:2554.00px;top:1010.81px;font-size:22.07px;color:#6c757d;-webkit-text-stroke:1.00px #6c757d;letter-spacing:-0.317px;">1.76</div>
<div class="t" style="right:734.0px;top:1109.4px;font-size:21px;color:#6c757d;text-align:right;"><b>Всього</b></div>
<div class="t" style="right:734.0px;top:1141.0px;font-size:21px;color:#6c757d;text-align:right;"><b>(погодинна</b></div>
<div class="t" style="right:734.0px;top:1172.6px;font-size:21px;color:#6c757d;text-align:right;"><b>ставка):</b></div>
<div class="t" style="right:734.0px;top:1204.2px;font-size:21px;color:#6c757d;text-align:right;">0,00 грн</div>
<div class="t" style="right:499.4px;top:1109.4px;font-size:21px;color:#6c757d;text-align:right;"><b>Не</b></div>
<div class="t" style="right:499.4px;top:1141.0px;font-size:21px;color:#6c757d;text-align:right;"><b>підтвердженний</b></div>
<div class="t" style="right:499.4px;top:1172.6px;font-size:21px;color:#6c757d;text-align:right;"><b>робочий час:</b> 00:00</div>
<div class="t" style="right:340.4px;top:1109.4px;font-size:21px;color:#6c757d;text-align:right;"><b>Загальний</b></div>
<div class="t" style="right:340.4px;top:1141.0px;font-size:21px;color:#6c757d;text-align:right;"><b>робочий</b></div>
<div class="t" style="right:340.4px;top:1172.6px;font-size:21px;color:#6c757d;text-align:right;"><b>час:</b> 01:48</div>
<div class="t" style="right:178.4px;top:1109.4px;font-size:21px;color:#6c757d;text-align:right;"><b>Загальний</b></div>
<div class="t" style="right:178.4px;top:1141.0px;font-size:21px;color:#6c757d;text-align:right;"><b>робочий</b></div>
<div class="t" style="right:178.4px;top:1172.6px;font-size:21px;color:#6c757d;text-align:right;"><b>час:</b> 1.8</div>
<div class="t" style="left:1511.48px;top:1321.40px;font-size:20.78px;color:#6c757d;-webkit-text-stroke:0.97px #6c757d;letter-spacing:0.307px;">Показано 1 до 2 з 2</div>
<div class="r" style="left:2532.2px;top:1308.3px;width:165.20000000000027px;height:46.0px;border:1.3px solid #dee2e6;border-radius:5px;background:#fff;"></div>
<div class="r" style="left:2590.2px;top:1308.3px;width:50.40000000000009px;height:46.0px;background:#3a7fd0;"></div>
<svg class="r" style="left:2555px;top:1322px;" width="14" height="18" viewBox="0 0 14 18" fill="none"><path d="M10 2.5 L4 8.8 L10 15" stroke="#50555a" stroke-width="2" stroke-linecap="round" stroke-linejoin="round"/></svg>
<div class="t" style="left:2608.70px;top:1319.92px;font-size:22.53px;color:#ffffff;">1</div>
<svg class="r" style="left:2661px;top:1322px;" width="14" height="18" viewBox="0 0 14 18" fill="none"><path d="M4 2.5 L10 8.8 L4 15" stroke="#50555a" stroke-width="2" stroke-linecap="round" stroke-linejoin="round"/></svg>
<div class="r" style="left:1492.3px;top:1358.3px;width:1205.1000000000001px;height:241.70000000000005px;border:1.3px solid #dee2e6;border-radius:6px;background:#fff;"></div>
<svg class="r" style="left:1471px;top:1387px;" width="21" height="17" viewBox="0 0 21 17" fill="none"><path d="M1.5 3 H19.5 M1.5 8.5 H19.5 M1.5 14 H19.5" stroke="#9ea3a8" stroke-width="1.9"/></svg>
<div class="t" style="left:1530.54px;top:1404.04px;font-size:25.21px;color:#343a40;-webkit-text-stroke:1.08px #343a40;letter-spacing:-0.343px;">Моніторинг настрою</div>
<div class="r" style="left:1529px;top:1448.2px;width:401.79999999999995px;height:38.5px;background:#eef1f4;border-radius:4px;"></div>
<div class="r" style="left:1529px;top:1448.2px;width:62.700000000000045px;height:38.5px;background:#656c73;border-radius:4px 0 0 4px;"></div>
<div class="t" style="left:1539.00px;top:1458.74px;font-size:19.20px;color:#ffffff;letter-spacing:-0.433px;">День</div>
<div class="t" style="left:1602.00px;top:1458.90px;font-size:19.01px;color:#495057;letter-spacing:-0.358px;">Тиждень</div>
<div class="t" style="left:1697.30px;top:1459.34px;font-size:18.49px;color:#495057;letter-spacing:-0.380px;">Місяць</div>
<div class="t" style="left:1775.00px;top:1459.30px;font-size:18.54px;color:#495057;letter-spacing:-0.375px;">Рік</div>
<div class="t" style="left:1819.80px;top:1458.86px;font-size:19.06px;color:#495057;letter-spacing:-0.320px;">Повний звіт</div>
<div class="r" style="left:0px;top:1470px;width:2860px;height:25px;background:linear-gradient(180deg,rgba(0,0,0,0) 0%,rgba(0,0,0,0.03) 60%,rgba(0,0,0,0.07) 100%);"></div>
<div class="r" style="left:0px;top:1495px;width:2860px;height:85px;background:#ffffff;"></div>
<div class="r" style="left:2415.2px;top:1531px;width:237.4000000000001px;height:69px;background:#eff2f5;border-radius:4px;"></div>
<svg class="r" style="left:2437px;top:1549px;" width="22" height="19" viewBox="0 0 22 19" fill="none"><path d="M19.5 9.5 H3.5 M9.5 3 L3.5 9.5 L9.5 16" stroke="#343a40" stroke-width="2.1" stroke-linecap="round" stroke-linejoin="round"/></svg>
<div class="t" style="left:2469.00px;top:1548.22px;font-size:21.59px;color:#343a40;letter-spacing:-0.229px;">Назад до списку</div>
<div class="r" style="left:2676px;top:1531px;width:165.69999999999982px;height:69px;background:#30b35d;border-radius:4px;"></div>
<svg class="r" style="left:2698px;top:1550px;" width="21" height="17" viewBox="0 0 21 17" fill="none"><path d="M2.5 9 L7.5 14 L18.5 3" stroke="#eafcee" stroke-width="2.3" stroke-linecap="round" stroke-linejoin="round"/></svg>
<div class="t" style="left:2728.70px;top:1548.07px;font-size:21.76px;color:#eafcee;letter-spacing:-0.279px;">Зберегти</div>
<div class="r" style="left:2758px;top:1426.7px;width:90px;height:90px;border-radius:50%;background:#29333f;box-shadow:0 4px 14px rgba(0,0,0,0.25);"></div>
<svg class="r" style="left:2783px;top:1452px;" width="40" height="40" viewBox="0 0 40 40" fill="none"><path d="M5.5 36 L8.5 28 A15.5 15 0 1 1 16 33.5 Z" stroke="#ffffff" stroke-width="3.6" stroke-linejoin="round"/></svg>
<div class="r" style="left:2757.6px;top:1426.7px;width:27.6px;height:27.6px;border-radius:50%;background:#30b35d;color:#fff;font-size:19px;line-height:27.6px;text-align:center;">1</div>
</body></html>
